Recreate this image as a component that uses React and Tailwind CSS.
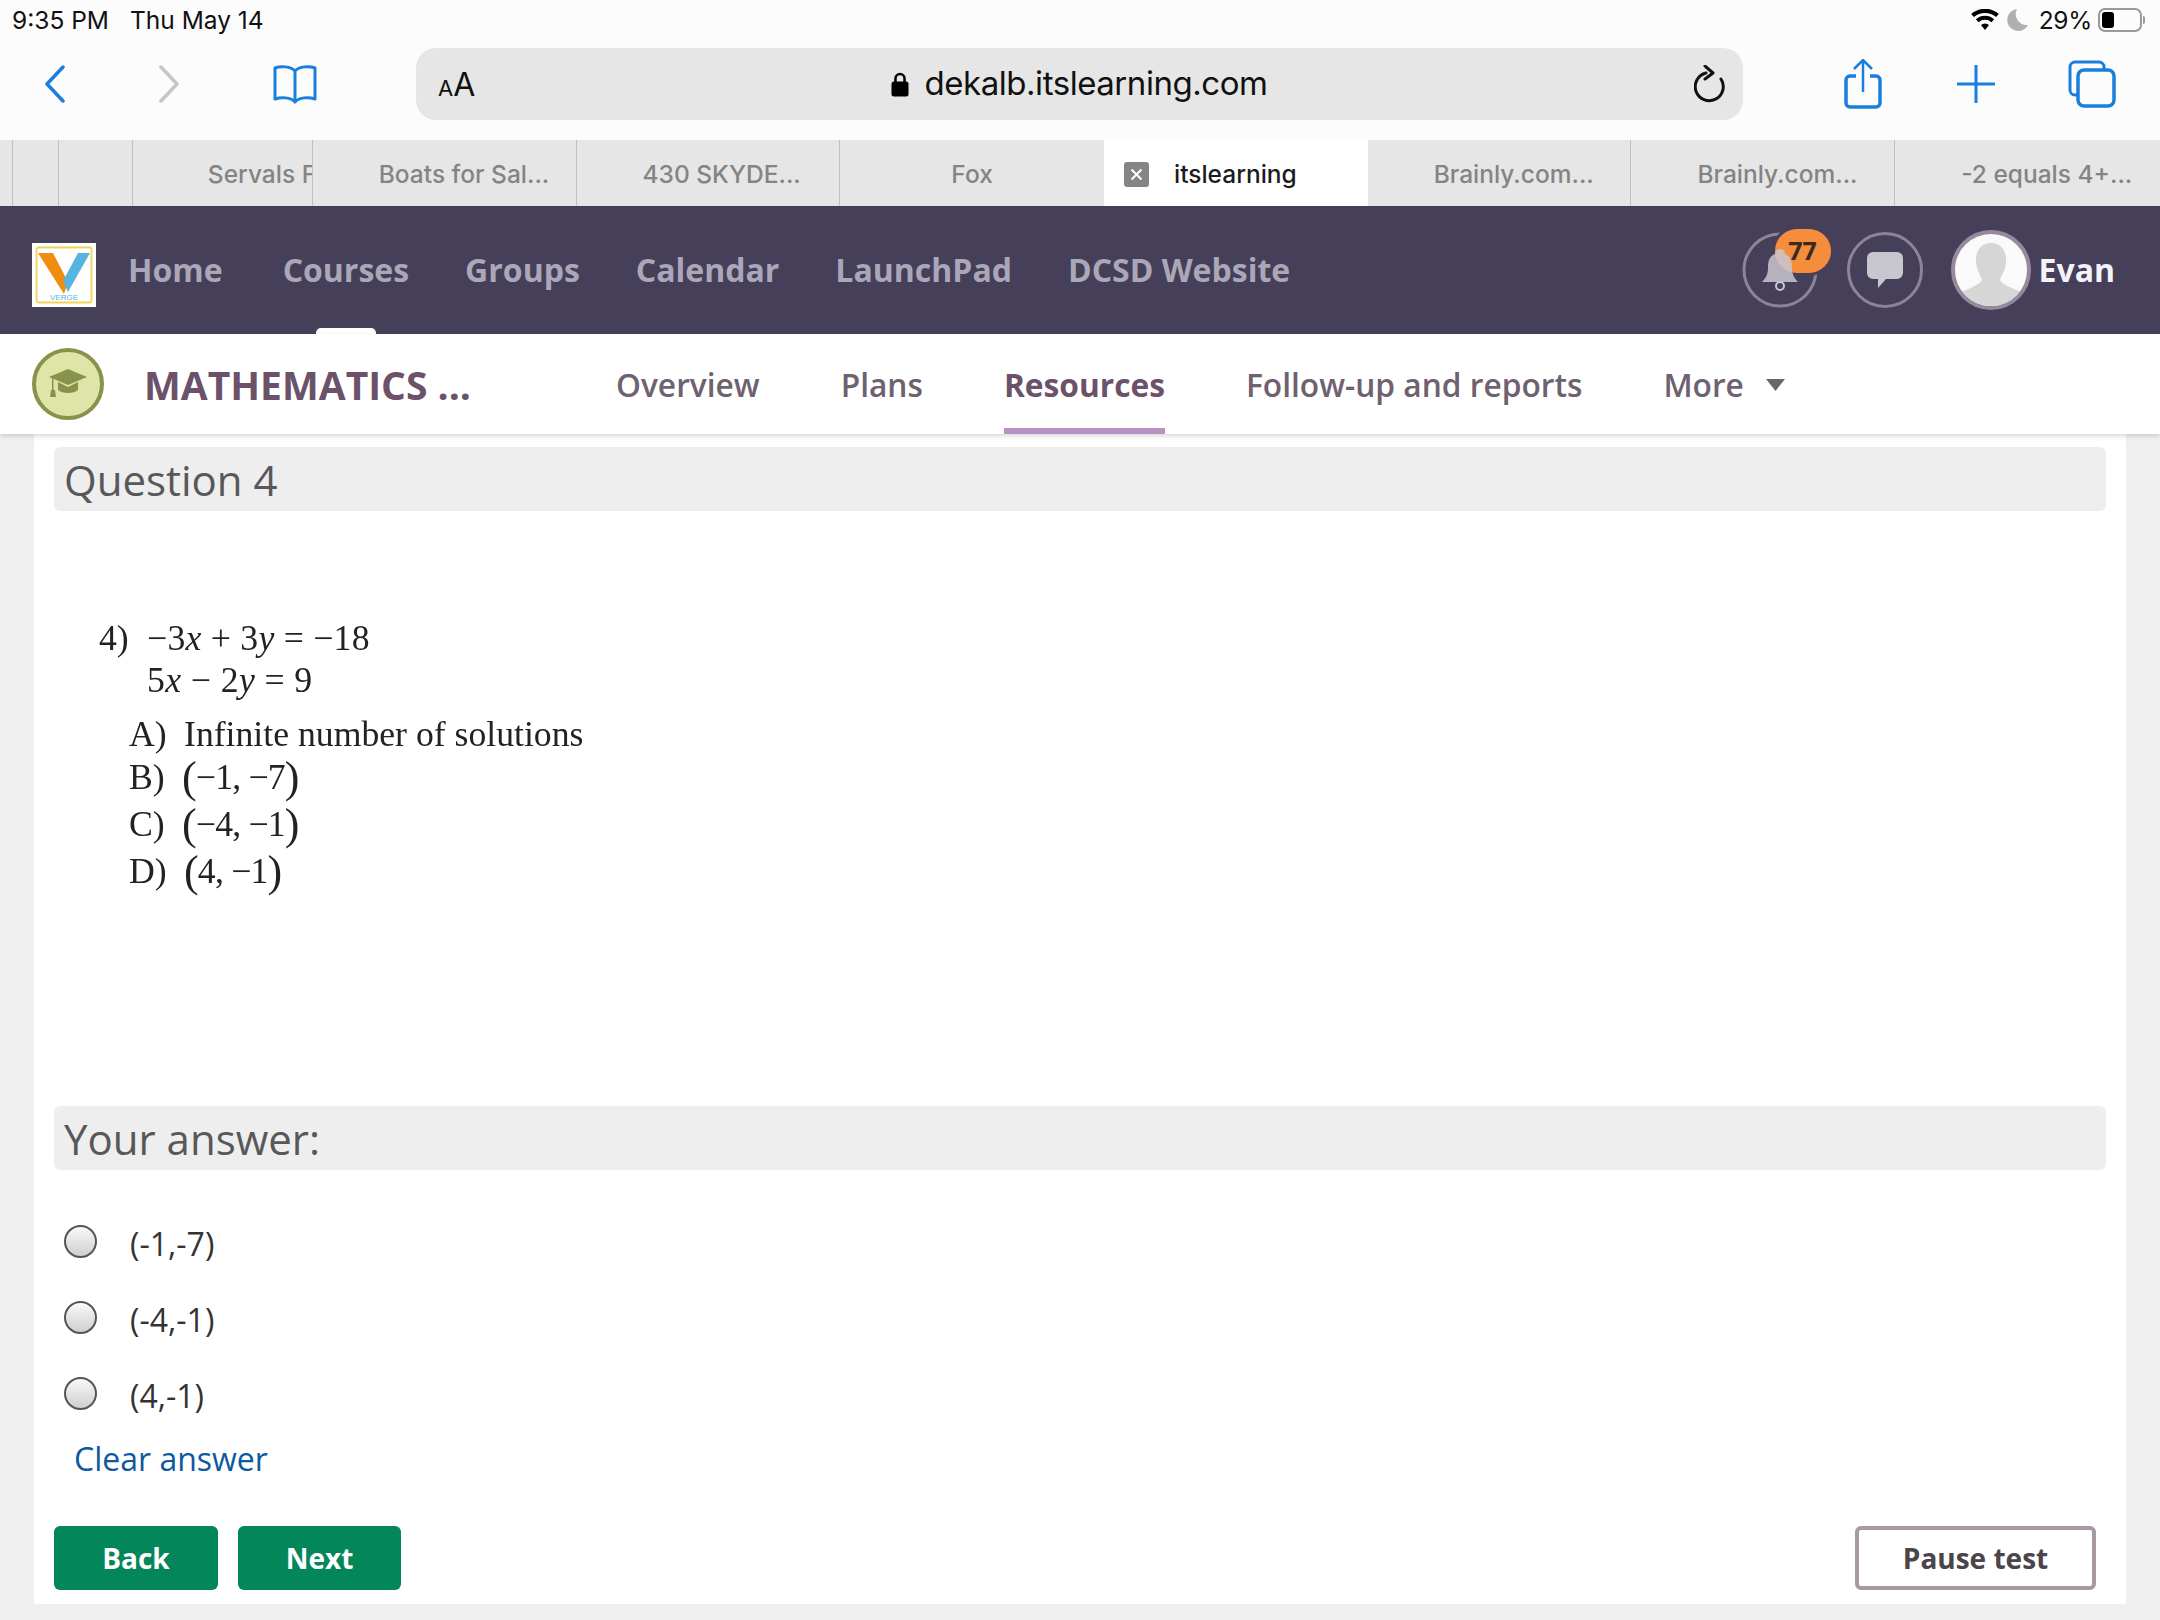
import React from 'react'

const navLinks = ['Home', 'Courses', 'Groups', 'Calendar', 'LaunchPad', 'DCSD Website']
const courseLinks = ['Overview', 'Plans', 'Resources', 'Follow-up and reports']
const tabs = ['Boats for Sal...', '430 SKYDE...', 'Fox', 'itslearning', 'Brainly.com...', 'Brainly.com...', '-2 equals 4+...']
const answers = ['(-1,-7)', '(-4,-1)', '(4,-1)']

const Blue = ({ w, h, view, children, className = '' }) => (
  <svg width={w} height={h} viewBox={view} fill="none" stroke="#1a7fdc" className={className}>
    {children}
  </svg>
)

function StatusBar() {
  return (
    <div className="h-[40px] flex items-center pl-[12px] pr-[15px] text-[24.5px] text-[#111] font-['Inter',sans-serif]">
      <span>9:35 PM</span>
      <span className="ml-[21px]">Thu May 14</span>
      <div className="ml-auto flex items-center">
        <svg width="28" height="22" viewBox="0 0 28 22" fill="#000">
          <path d="M14 21l-4-5a6 6 0 0 1 8 0z" />
          <path d="M7.5 13.2l-2.6-3a14 14 0 0 1 18.2 0l-2.6 3a10 10 0 0 0-13 0z" />
          <path d="M2.900 8l-2.700-3a21 21 0 0 1 27.600 0l-2.700 3a17 17 0 0 0-22.200 0z" />
        </svg>
        <svg width="22" height="24" viewBox="0 0 22 24" fill="#b0b0b0" className="ml-[8px]">
          <path d="M10 1a11 11 0 1 0 11 16A11 11 0 0 1 10 1z" />
        </svg>
        <span className="ml-[10px] tracking-[-0.3px]">29%</span>
        <div className="ml-[6px] w-[44px] h-[24px] border-2 border-[#999] rounded-[7px] p-[2px]">
          <div className="w-[12px] h-full bg-black rounded-[3px]" />
        </div>
        <div className="ml-[1px] w-[2px] h-[8px] bg-[#999] rounded-r-sm" />
      </div>
    </div>
  )
}

function Toolbar() {
  return (
    <div className="h-[100px] flex items-center relative">
      <div className="w-[416px] shrink-0 flex items-center pl-[44px] -mt-[12px]">
        <Blue w={22} h={38} view="0 0 22 38">
          <path d="M19 2 3 19l16 17" strokeWidth="3.500" strokeLinecap="round" strokeLinejoin="round" />
        </Blue>
        <svg width="22" height="38" viewBox="0 0 22 38" fill="none" stroke="#c6c6c6" className="ml-[92px]">
          <path d="M3 2l16 17L3 36" strokeWidth="3.500" strokeLinecap="round" strokeLinejoin="round" />
        </svg>
        <Blue w={46} h={40} view="0 0 46 40" className="ml-[92px]">
          <path d="M23 7C19 2 8 2 3 4v31c6-2 16-2 20 3 4-5 14-5 20-3V4C38 2 27 2 23 7zM23 7v31" strokeWidth="3" strokeLinejoin="round" />
        </Blue>
      </div>
      <div className="relative w-[1327px] h-[72px] -mt-[12px] bg-[#e6e6e6] rounded-[20px] flex items-center justify-center font-['Inter',sans-serif] text-[#111]">
        <span className="absolute left-[22px] top-[21px] leading-none">
          <span className="text-[22px]">A</span>
          <span className="text-[32px]">A</span>
        </span>
        <svg width="18" height="26" viewBox="0 0 18 26" className="mr-[15px]">
          <path d="M4.500 12V7.500a4.500 4.500 0 0 1 9 0V12" fill="none" stroke="#000" strokeWidth="2.500" />
          <rect x="0.500" y="10.500" width="17" height="15" rx="2.500" fill="#000" />
        </svg>
        <span className="text-[33px] tracking-[-0.45px]">dekalb.itslearning.com</span>
        <svg width="32" height="38" viewBox="0 0 32 38" fill="none" stroke="#111" strokeWidth="3" className="absolute right-[17px] top-[17px]">
          <path d="M12 8a14 14 0 1 0 15 6" strokeLinecap="round" />
          <path d="M11 1l8 7-8 6" strokeLinejoin="round" strokeLinecap="round" />
        </svg>
      </div>
      <div className="flex items-center -mt-[12px] pl-[101px]">
        <Blue w={38} h={50} view="0 0 38 50">
          <path d="M12 17H6a4 4 0 0 0-4 4v23a4 4 0 0 0 4 4h26a4 4 0 0 0 4-4V21a4 4 0 0 0-4-4h-6" strokeWidth="3.500" />
          <path d="M19 33V2M10 10l9-9 9 9" strokeWidth="2.500" />
        </Blue>
        <Blue w={38} h={38} view="0 0 38 38" className="ml-[75px]">
          <path d="M19 1v36M1 19h36" strokeWidth="3" strokeLinecap="round" />
        </Blue>
        <Blue w={48} h={48} view="0 0 48 48" className="ml-[73px]">
          <path d="M9 35H7a5 5 0 0 1-5-5V7a5 5 0 0 1 5-5h24a5 5 0 0 1 5 5v3" strokeWidth="3" />
          <rect x="10" y="10" width="36" height="36" rx="6" strokeWidth="3.500" />
        </Blue>
      </div>
    </div>
  )
}

function TabStrip() {
  return (
    <div className="h-[66px] flex bg-[#e6e6e6] text-[24.5px] font-medium text-[#848484] font-['Inter',sans-serif]">
      <div className="w-[13px] border-r border-[#c0c0c0]" />
      <div className="w-[46px] border-r border-[#c0c0c0]" />
      <div className="w-[74px] border-r border-[#c0c0c0]" />
      <div className="w-[180px] border-r border-[#c0c0c0] overflow-hidden flex items-center pl-[75px] pt-[2px] whitespace-nowrap">
        Servals F
      </div>
      {tabs.map((t, i) => {
        if (t === 'itslearning') {
          return (
            <div key={i} className="w-[264px] bg-white flex items-center pl-[20px] pt-[2px] text-[#1c1c1c]">
              <div className="w-[25px] h-[25px] bg-[#858585] rounded-[3px] text-white flex items-center justify-center">
                <svg width="13" height="13" viewBox="0 0 13 13" stroke="#fff" strokeWidth="2">
                  <path d="M1.500 1.500l10 10M11.500 1.500l-10 10" />
                </svg>
              </div>
              <span className="ml-[25px]">{t}</span>
            </div>
          )
        }
        const noBorder = i === 2 || i === 6
        return (
          <div
            key={i}
            className={`flex items-center pt-[2px] ${t === 'Fox' ? 'justify-center' : 'pl-[66px]'} ${i === 6 ? 'w-[265px]' : 'w-[264px]'} ${noBorder ? '' : 'border-r border-[#c0c0c0]'}`}
          >
            {t}
          </div>
        )
      })}
    </div>
  )
}

function Logo() {
  return (
    <svg width="64" height="64" viewBox="0 0 64 64" className="shrink-0 mt-[9px]">
      <rect width="64" height="64" fill="#fff" />
      <rect x="4.500" y="4.500" width="55" height="55" rx="2" fill="none" stroke="#f1d35a" strokeWidth="1.800" />
      <path d="M6 10h15l15 29-4 12z" fill="#f08c10" />
      <path d="M58 10H46L31 38l5 11z" fill="#56b4e0" />
      <text x="32" y="57" textAnchor="middle" fontSize="8" fill="#5ab4d8" fontFamily="Liberation Sans, sans-serif">VERGE</text>
    </svg>
  )
}

function NavRight() {
  return (
    <div className="ml-auto flex items-center pr-[45px]">
      <div className="relative w-[76px] h-[76px]">
        <svg width="76" height="76" viewBox="0 0 76 76" fill="none" className="absolute inset-0">
          <circle cx="38" cy="38" r="36" stroke="#8b8598" strokeWidth="3" />
        </svg>
        <div className="absolute left-[33px] -top-[3px] w-[56px] h-[44px] rounded-full bg-[#f58d3d] shadow-[0_0_0_3px_#463f59] flex items-center justify-center text-[25px] font-bold text-[#3a2a20]">
          77
        </div>
        <svg width="36" height="44" viewBox="0 0 36 44" className="absolute left-[20px] top-[16px]">
          <path d="M18 1c3 0 5 2 5 5 6 2 7 8 7 14 0 7 3 11 6 14H0c3-3 6-7 6-14 0-6 1-12 7-14 0-3 2-5 5-5z" fill="#c9c7d0" fillOpacity="0.850" />
          <circle cx="18" cy="38" r="4" fill="none" stroke="#c9c7d0" strokeWidth="2" />
        </svg>
      </div>
      <div className="w-[76px] h-[76px] ml-[29px] rounded-full border-[3px] border-[#8b8598] flex items-center justify-center">
        <svg width="36" height="36" viewBox="0 0 36 36" fill="#c8c7cf">
          <path d="M6 0h24a6 6 0 0 1 6 6v15a6 6 0 0 1-6 6H19l-8 9v-9H6a6 6 0 0 1-6-6V6a6 6 0 0 1 6-6z" />
        </svg>
      </div>
      <div className="ml-[28px] w-[80px] h-[80px] rounded-full border-[4px] border-[#96899b] bg-[#fafafa] overflow-hidden">
        <svg width="72" height="72" viewBox="0 0 72 72" fill="#d6d6d6">
          <path d="M36 9c11 0 16 9 15 20-1 8-5 13-6 17 2 5 14 9 27 14v12H0V60c13-5 25-9 27-14-1-4-5-9-6-17-1-11 4-20 15-20z" />
        </svg>
      </div>
      <span className="ml-[8px] text-[32px] font-bold text-[#f4f3f7]">Evan</span>
    </div>
  )
}

function TopNav() {
  return (
    <div className="h-[128px] bg-[#463f59] flex items-center pl-[32px] relative">
      <Logo />
      <nav className="ml-[32px] flex gap-[56px] text-[32px] font-bold text-[#aaa7b8]">
        {navLinks.map((l) => (
          <span key={l} className={l === 'Home' ? 'mr-[4px]' : ''}>{l}</span>
        ))}
      </nav>
      <NavRight />
      <div className="absolute left-[316px] bottom-0 w-[60px] h-[6px] bg-white rounded-t-[5px]" />
    </div>
  )
}

function CourseBar() {
  return (
    <div className="relative z-10 h-[100px] bg-white flex items-center pl-[32px] shadow-[0_2px_5px_rgba(0,0,0,0.16)]">
      <div className="w-[72px] h-[72px] rounded-full bg-[#dfe5a9] border-[4px] border-[#87924a] flex items-center justify-center shrink-0">
        <svg width="38" height="30" viewBox="0 0 38 30" fill="#87924a">
          <path d="M19 0l19 8-19 8L0 8z" />
          <path d="M9 13l10 5 10-5v8c-4 4-16 4-20 0z" />
          <path d="M3 9h1.500v12H6l1 7H1l1-7h1z" />
        </svg>
      </div>
      <span className="ml-[40px] pt-[2px] w-[472px] shrink-0 text-[39px] font-bold text-[#6b5269]">MATHEMATICS ...</span>
      <div className="flex items-stretch h-full gap-[81px] text-[31.7px] font-semibold text-[#6e6170]">
        {courseLinks.map((l) => (
          <span
            key={l}
            className={`flex items-center pt-[8px] ${l === 'Resources' ? 'font-bold text-[#6b5269] border-b-[6px] border-[#b991c2]' : 'border-b-[6px] border-transparent'}`}
          >
            {l}
          </span>
        ))}
        <span className="flex items-center border-b-[6px] border-transparent pt-[8px]">
          More
          <svg width="19" height="12" viewBox="0 0 19 12" fill="#6e6170" className="ml-[22px]">
            <path d="M0 0h19l-9.500 12z" />
          </svg>
        </span>
      </div>
    </div>
  )
}

function SectionBar({ children }) {
  return (
    <div className="h-[64px] bg-[#eeeeee] rounded-[6px] flex items-center pl-[10px] text-[42px] text-[#58585a]">
      {children}
    </div>
  )
}

function Paren({ children }) {
  return <span className="text-[44px] leading-none align-[-3px]">{children}</span>
}

function QuestionFigure() {
  return (
    <div className="h-[595px] pt-[106px] pl-[45px] font-['Liberation_Serif',serif] text-[35.7px] text-[#222] blur-[0.4px]">
      <div className="h-[42px] leading-[42px] flex">
        <span className="w-[48px]">4)</span>
        <span className="tracking-[0.25px]">−3<i>x</i> + 3<i>y</i> = −18</span>
      </div>
      <div className="h-[42px] leading-[42px] pl-[48px] tracking-[0.4px]">
        5<i>x</i> − 2<i>y</i> = 9
      </div>
      <div className="ml-[30px] mt-[10px] leading-[46px]">
        <div className="h-[43px] flex">
          <span className="w-[55px]">A)</span>
          <span>Infinite number of solutions</span>
        </div>
        <div className="h-[47px] flex">
          <span className="w-[53px]">B)</span>
          <span className="tracking-[-0.8px]"><Paren>(</Paren>−1, −7<Paren>)</Paren></span>
        </div>
        <div className="h-[47px] flex">
          <span className="w-[53px]">C)</span>
          <span className="tracking-[-0.8px]"><Paren>(</Paren>−4, −1<Paren>)</Paren></span>
        </div>
        <div className="h-[47px] flex">
          <span className="w-[55px]">D)</span>
          <span className="tracking-[-0.8px]"><Paren>(</Paren>4, −1<Paren>)</Paren></span>
        </div>
      </div>
    </div>
  )
}

function AnswerOption({ label }) {
  return (
    <div className="h-[76px] flex items-center pl-[10px]">
      <div className="w-[33px] h-[33px] -mt-[5px] rounded-full border-2 border-[#555] bg-gradient-to-b from-[#fafafa] to-[#cfcfcf] shrink-0" />
      <span className="ml-[33px] text-[32px] text-[#333]">{label}</span>
    </div>
  )
}

export default function App() {
  return (
    <div className="w-[2160px] h-[1620px] flex flex-col overflow-hidden bg-[#f0f0f0] font-['Open_Sans',sans-serif]">
      <div className="bg-[#fcfcfc]">
        <StatusBar />
        <Toolbar />
      </div>
      <TabStrip />
      <TopNav />
      <CourseBar />
      <main className="flex-1 mx-[34px] mb-[16px] bg-white px-[20px] pt-[13px] flex flex-col">
        <SectionBar>Question 4</SectionBar>
        <QuestionFigure />
        <SectionBar>Your answer:</SectionBar>
        <div className="mt-[36px]">
          {answers.map((a) => (
            <AnswerOption key={a} label={a} />
          ))}
        </div>
        <a className="ml-[20px] mt-[3px] text-[32px] leading-[44px] text-[#0d5a9e]">Clear answer</a>
        <div className="mt-auto mb-[14px] flex gap-[20px] pr-[10px]">
          <button className="w-[164px] h-[64px] rounded-[6px] bg-[#03875a] text-white text-[28px] font-bold">Back</button>
          <button className="w-[163px] h-[64px] rounded-[6px] bg-[#03875a] text-white text-[28px] font-bold">Next</button>
          <button className="ml-auto w-[241px] h-[64px] rounded-[6px] border-[4px] border-[#a79aa5] bg-white text-[#4a454b] text-[28px] font-bold">Pause test</button>
        </div>
      </main>
    </div>
  )
}
